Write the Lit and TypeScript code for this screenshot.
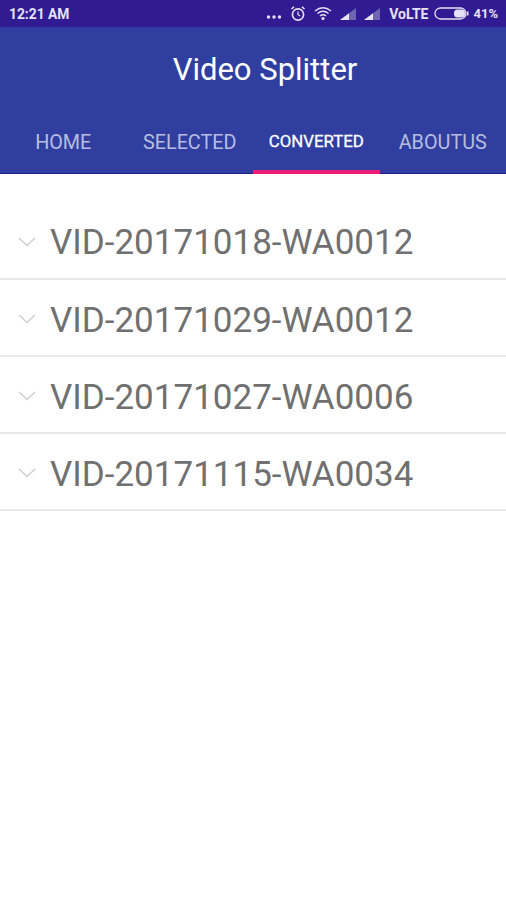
import { LitElement, html, css, svg } from "lit";
import { customElement } from "lit/decorators.js";

const ITEMS = ["VID-20171018-WA0012", "VID-20171029-WA0012", "VID-20171027-WA0006", "VID-20171115-WA0034"];
const TABS = ["HOME", "SELECTED", "CONVERTED", "ABOUTUS"];

@customElement("app-root")
export class AppRoot extends LitElement {
  static styles = css`
    :host { display: block; width: 506px; height: 900px; background: #fff; font-family: Roboto, "Liberation Sans", sans-serif; overflow: hidden; }
    .status { height: 27px; background: #311b92; color: #e4e2f4; display: flex; align-items: center; justify-content: space-between; padding: 0 8px 0 9px; font-size: 13.8px; font-weight: 700; box-sizing: border-box; }
    .status-right { display: flex; align-items: center; font-size: 13px; font-weight: 700; }
    .status-right svg { display: block; flex: none; }
    .dots { margin-right: 8px; margin-top: 6px; }
    .alarm { margin-right: 8px; }
    .wifi { margin-right: 8px; }
    .sig { display: block; margin-right: 7px; }
    .sig.last { margin-right: 8px; }
    .volte { margin-right: 6px; font-size: 14px; }
    .batt { margin-right: 4px; }
    .head { background: #303f9f; height: 147px; display: flex; flex-direction: column; box-sizing: border-box; border-bottom: 1px solid #1a1f96; }
    .title { height: 85px; display: flex; align-items: center; justify-content: center; color: #fff; font-size: 31px; padding-left: 24px; box-sizing: border-box; }
    .tabs { display: grid; grid-template-columns: repeat(4, 1fr); flex: 1; }
    .tab { display: flex; align-items: center; justify-content: center; color: #b7bde2; font-size: 19.8px; box-sizing: border-box; border-bottom: 4px solid transparent; margin-bottom: -1px; padding-top: 2px; }
    .tab.on { color: #fff; font-size: 16.8px; font-weight: 400; border-bottom-color: #e91e78; -webkit-text-stroke: 0.3px #fff; padding-top: 0; padding-bottom: 1px; }
    .list { padding-top: 28px; }
    .row { height: 77px; display: flex; align-items: center; box-sizing: border-box; border-bottom: 2px solid #e8e8e8; padding-left: 18px; padding-top: 5px; color: #707070; font-size: 35px; }
    .row:first-child { height: 78px; }
    .row svg { display: block; flex: none; margin-right: 14px; margin-bottom: 2px; }
  `;

  private signal() {
    return svg`<svg width="17" height="14" viewBox="0 0 17 14"><path d="M0 13 L16 1 V13 Z" fill="#6e64b4"/><path d="M0 13 L9 6.25 V13 Z" fill="#e4e2f4"/></svg>`;
  }

  render() {
    return html`
      <div class="status">
        <span>12:21 AM</span>
        <div class="status-right">
          <svg class="dots" width="16" height="6" viewBox="0 0 16 6"><circle cx="2.5" cy="3" r="1.7" fill="#e4e2f4"/><circle cx="8" cy="3" r="1.7" fill="#e4e2f4"/><circle cx="13.5" cy="3" r="1.7" fill="#e4e2f4"/></svg>
          <svg class="alarm" width="16" height="17" viewBox="0 0 16 17"><circle cx="8" cy="9.5" r="5.6" fill="none" stroke="#e4e2f4" stroke-width="1.6"/><path d="M8 6.5 V9.5 L10 11" fill="none" stroke="#e4e2f4" stroke-width="1.2"/><path d="M1.5 4 L4 1.8 M14.5 4 L12 1.8" stroke="#e4e2f4" stroke-width="1.6"/></svg>
          <svg class="wifi" width="18" height="15" viewBox="0 0 18 15"><g fill="none" stroke="#e4e2f4" stroke-width="1.4"><path d="M1 5 Q9 -1.5 17 5"/><path d="M3.5 7.5 Q9 3 14.5 7.5"/><path d="M6 10 Q9 7.5 12 10"/></g><circle cx="9" cy="12.5" r="1.6" fill="#e4e2f4"/></svg>
          <span class="sig">${this.signal()}</span>
          <span class="sig last">${this.signal()}</span>
          <span class="volte">VoLTE</span>
          <svg class="batt" width="35" height="13" viewBox="0 0 35 13"><rect x="1" y="1" width="31" height="11" rx="5.5" fill="none" stroke="#e4e2f4" stroke-width="1.3"/><rect x="20" y="2.5" width="11" height="8" rx="3.5" fill="#e4e2f4"/><rect x="33" y="4.5" width="1.5" height="4" fill="#e4e2f4"/></svg>
          <span>41%</span>
        </div>
      </div>
      <div class="head">
        <div class="title">Video Splitter</div>
        <div class="tabs">
          ${TABS.map((t) => html`<div class="tab ${t === "CONVERTED" ? "on" : ""}">${t}</div>`)}
        </div>
      </div>
      <div class="list">
        ${ITEMS.map((t) => html`<div class="row">
          <svg width="18" height="10" viewBox="0 0 18 10"><path d="M1 1 L9 8.5 L17 1" fill="none" stroke="#cfcfcf" stroke-width="1.6"/></svg>
          <span>${t}</span>
        </div>`)}
      </div>
    `;
  }
}
